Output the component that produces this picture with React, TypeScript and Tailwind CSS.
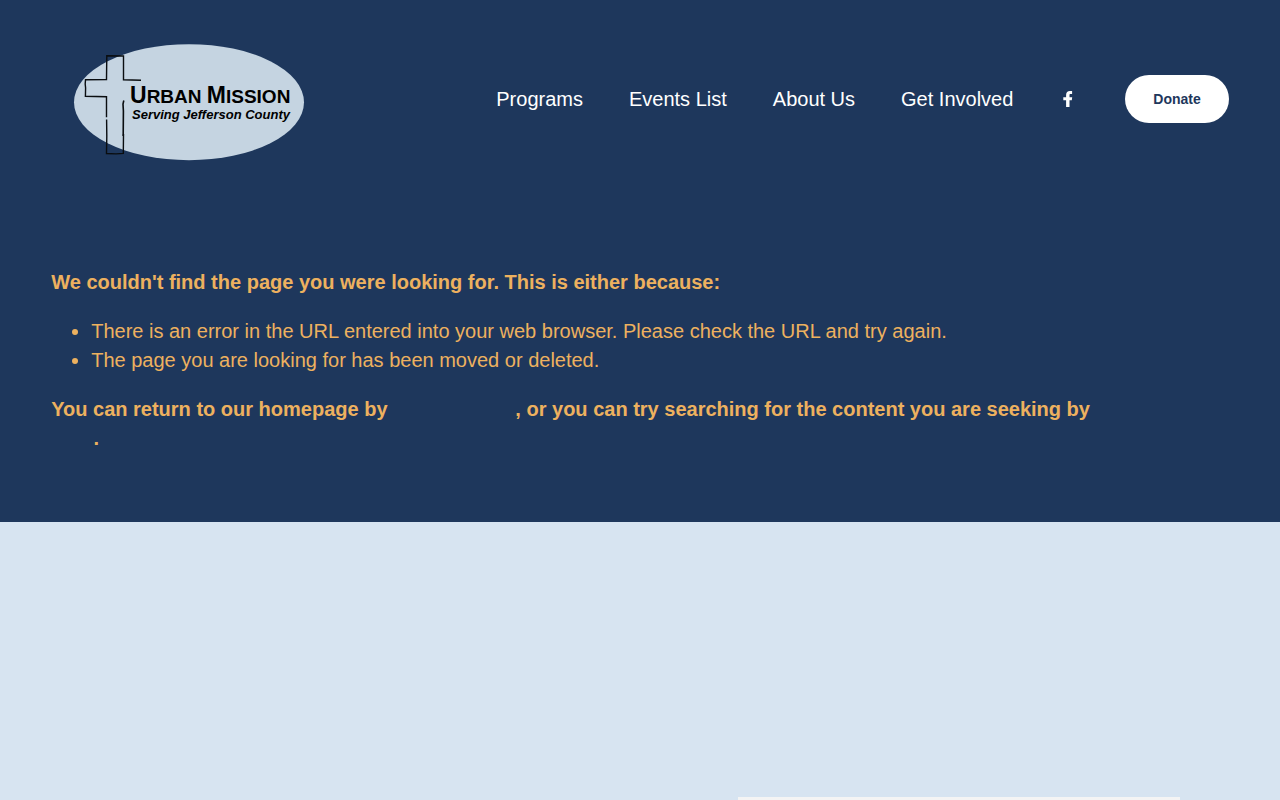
import { FC, ReactNode } from 'react';

type NavItem = {
    label: string;
    href: string;
};

const navItems: NavItem[] = [
    { label: 'Programs', href: '/programs' },
    { label: 'Events List', href: '/events' },
    { label: 'About Us', href: '/about' },
    { label: 'Get Involved', href: '/get-involved' },
];

const Logo: FC = () => (
    <svg viewBox="0 0 276 138" className="block h-[138px] w-[276px]" role="img" aria-label="Urban Mission">
        <ellipse cx="138" cy="72.200" rx="115" ry="58" fill="#c5d4e1" />
        <g fill="none" stroke="#0a0d10">
            <path d="M90 50.200L72.500 49.800V26L55.800 25.700L55.500 49.500L34.500 49.800L34.200 54L34.600 58L34.400 66.300L55.500 66.800V87.300" strokeWidth="1.400" />
            <path d="M55.600 89.600L55.800 106L55.500 123.500L65 123.900L72.300 123.400L72.500 104" strokeWidth="1.400" />
            <path d="M72.800 70.500L72 74L72.400 81L72.200 106" strokeWidth="1.600" />
        </g>
        <g fontFamily="'Liberation Sans', Arial, sans-serif" fontWeight="700" fill="#000">
            <text x="79" y="73" fontSize="19">
                <tspan fontSize="23">U</tspan>RBAN <tspan fontSize="23">M</tspan>ISSION
            </text>
            <text x="81" y="89" fontSize="13" fontStyle="italic">Serving Jefferson County</text>
        </g>
    </svg>
);

const FacebookIcon: FC = () => (
    <svg viewBox="0 0 16 16" className="size-4" fill="currentColor" aria-hidden="true">
        <path d="M5.100 16V9.200H2.300V6.300h2.800V4.100C5.100 1.500 6.500 0 8.900 0h2.200v2.900H9.600C8.600 2.900 8.500 3.400 8.500 4.200v2.100h2.700l-.4 2.900H8.500V16z" />
    </svg>
);

// Links share the section colour
const QuietLink: FC<{ href: string; children: ReactNode }> = ({ href, children }) => (
    <a href={href} className="text-[#1e375c]">
        {children}
    </a>
);

const App: FC = () => {
    return (
        <div className="flex min-h-screen flex-col bg-[#d7e4f1] font-['Liberation_Sans',Arial,sans-serif]">
            <div className="bg-[#1e375c]">
                <header className="flex items-center justify-between px-[4vw] pt-[30px]">
                    <a href="/">
                        <Logo />
                    </a>
                    <div className="flex items-center gap-12 text-white">
                        <nav className="flex items-center gap-[46px] text-[20px]">
                            {navItems.map(item => (
                                <a key={item.label} href={item.href}>
                                    {item.label}
                                </a>
                            ))}
                        </nav>
                        <a href="https://facebook.com" aria-label="Facebook">
                            <FacebookIcon />
                        </a>
                        <a
                            href="/donate"
                            className="flex h-12 items-center rounded-full bg-white px-7 text-sm font-bold text-[#1e375c]"
                        >
                            Donate
                        </a>
                    </div>
                </header>
                <main className="pt-[100px] pr-[5vw] pb-[69px] pl-[4vw] text-[20px] leading-[29px] text-[#edb15f]">
                    <p className="font-bold">
                        We couldn't find the page you were looking for. This is either because:
                    </p>
                    <ul className="my-5 list-disc pl-10">
                        <li>There is an error in the URL entered into your web browser. Please check the URL and try again.</li>
                        <li>The page you are looking for has been moved or deleted.</li>
                    </ul>
                    <p className="font-bold">
                        You can return to our homepage by <QuietLink href="/">clicking here</QuietLink>, or you can try
                        searching for the content you are seeking by <QuietLink href="/search">clicking here</QuietLink>.
                    </p>
                </main>
            </div>
            <section className="flex flex-1 justify-end px-[100px] pt-[275px]">
                <div className="w-[442px] bg-[#f4f4f4]" />
            </section>
        </div>
    );
};

export default App;
